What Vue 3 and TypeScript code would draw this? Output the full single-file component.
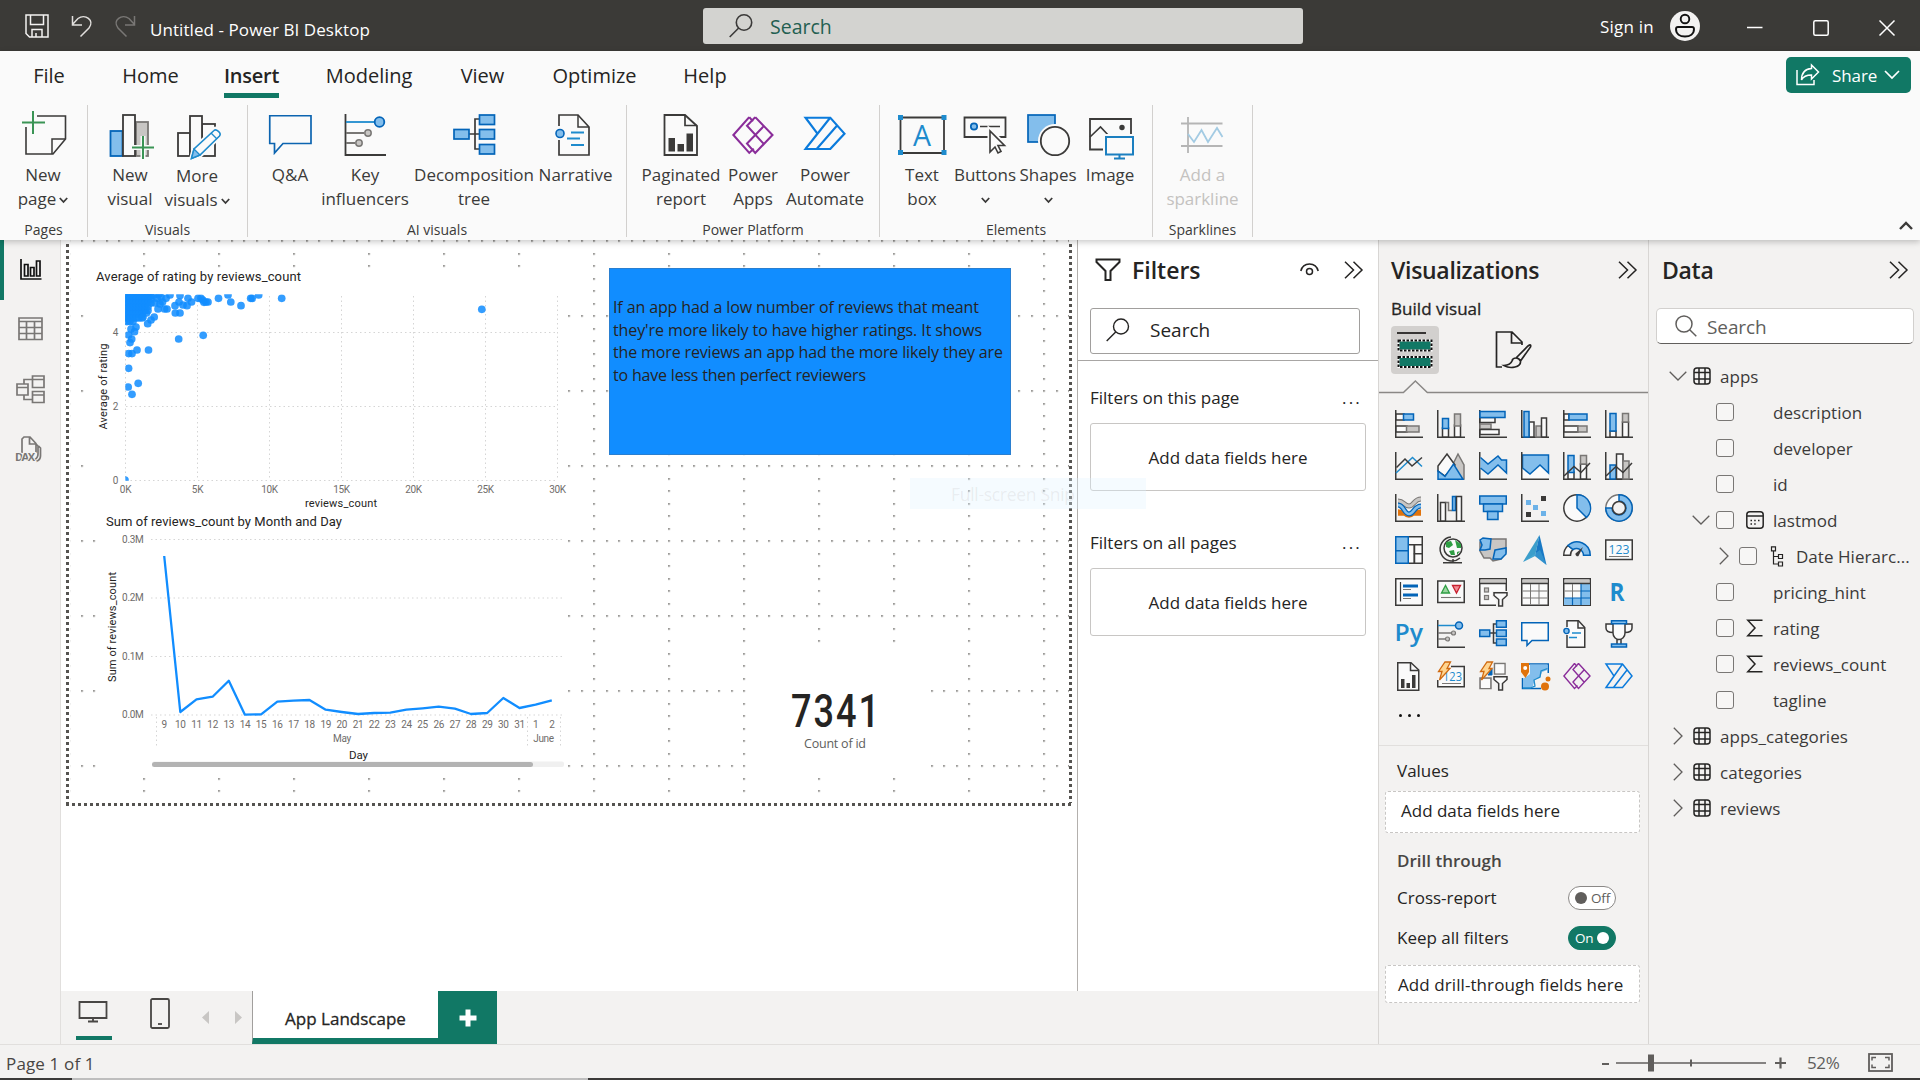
<script setup lang="ts">
interface RibbonButton { icon: string; lines: string[]; width: number; chevron?: 'inline' | 'below'; disabled?: boolean; lower?: boolean }
interface RibbonGroup { title: string; width: number; pad: number; buttons: RibbonButton[] }
interface TreeRow { label: string; kind: 'table' | 'field' | 'sub'; open?: boolean; chevron?: boolean; icon?: string }

const DARK = '#3b3a39'
const palette: Record<string, [string, string]> = {
  b: ['#83beec', '#0364b8'],
  g: ['#c8c6c4', '#797775'],
  w: ['#fafafa', DARK],
}
const box = (x: number, y: number, w: number, h: number, kind = 'w', sw = 1.5): string =>
  `<rect x="${x}" y="${y}" width="${w}" height="${h}" fill="${palette[kind][0]}" stroke="${palette[kind][1]}" stroke-width="${sw}"/>`
const line = (d: string, stroke = DARK, sw = 1.5, fill = 'none'): string =>
  `<path d="${d}" fill="${fill}" stroke="${stroke}" stroke-width="${sw}"/>`
const axis = line('M.75 0V27.25H28')
const word = (x: number, y: number, size: number, text: string, weight = 400, len = 0): string =>
  `<text x="${x}" y="${y}" font-size="${size}" font-weight="${weight}" fill="#1e8bcd" font-family="Open Sans, sans-serif"${len ? ` textLength="${len}" lengthAdjust="spacingAndGlyphs"` : ''}>${text}</text>`
const bolt = line('M8 0H13.500L10 6.500H13L2.500 18 5 9.500H1.500Z', '#d06a10', 1.3, '#ffd590')
const funnel = line('M15 14.700H28V17.500L23.500 21.500V28H19.700V21.500L15 17.500Z', DARK, 1.5, '#fafafa')

const keyInfluencers = axis + line('M1 5.500H19', '#1e8bcd') + `<circle cx="22" cy="5.500" r="3.500" fill="#83beec" stroke="#0364b8" stroke-width="1.500"/>` +
  line('M1 13H15M1 19H9', '#797775') + `<circle cx="16.500" cy="13" r="2" fill="#c8c6c4" stroke="#797775" stroke-width="1.200"/><circle cx="10.500" cy="19" r="2" fill="#c8c6c4" stroke="#797775" stroke-width="1.200"/>`
const decomposition = line('M10 13H18M18 4H14.500V23H18') + box(.75, 10, 10, 6.5, 'b') + box(17.5, .75, 9.75, 6.5, 'b') + box(17.5, 10, 9.75, 6.5, 'b') + box(17.5, 19, 9.75, 6.5, 'b')
const qna = line('M.75 2.750H27.250V20.500H11L6 25.500V20.500H.75Z', '#0364b8', 1.5, '#fafafa')
const narrative = line('M4 7V.75H15.500L21.750 7.500V27.250H4V15', DARK, 1.5, '#fafafa') + line('M15 1V8H21.500') +
  `<circle cx="3.500" cy="11" r="2.600" fill="#83beec" stroke="#0364b8" stroke-width="1.400"/>` + line('M9 13H18M6 17.500H14', '#1e8bcd', 1.3)
const paginated = line('M2.750 .75H16L23.750 8V28.250H2.750Z', DARK, 1.5, '#fafafa') + line('M15.500 1V8.500H23.500') + `<path d="M6 17H9.500V26H6ZM11.500 21H15V26H11.500ZM17 13H20.500V26H17Z" fill="${DARK}"/>`
const powerApps = line('M11.500 1.500L.9 14 11.500 26.500L14.500 23.500M11.500 1.500L14 4.500M15.500 1.500L27 14 15.500 26.500 10 20 21 8M15.500 1.500L10 7.500 21 20', '#8a2d9a', 1.4)
const powerAutomate = line('M1 2H17.500L27 14 17.500 25.500H1L9 14ZM17.500 2L1 25.500M22 8L8.500 25.500', '#0b7bdc', 1.5)

const visualIcons: string[] = [
  axis + box(1, 4, 8, 6) + box(8.5, 4, 10, 6, 'b') + box(1, 16, 11, 6) + box(11.5, 16, 12.5, 6, 'g'),
  axis + box(5.5, 18, 6, 9) + box(5.5, 8.5, 6, 10, 'b') + box(17.5, 15, 6, 12) + box(17.5, 4, 6, 12, 'g'),
  axis + box(1, 7.5, 15, 5) + box(1, 1.5, 25, 6, 'b') + box(1, 14, 11, 5, 'g') + box(1, 19.5, 19, 5),
  axis + box(8, 12, 5, 15) + box(3, 1.5, 5, 25.5, 'b') + box(15, 16, 5.5, 11, 'g') + box(20.5, 8, 5, 19),
  axis + box(1, 4, 5, 6) + box(6, 4, 18, 6, 'b') + box(1, 16, 14, 6) + box(15, 16, 9, 6, 'g'),
  axis + box(5, 21, 6, 6) + box(5, 3.5, 6, 17.5, 'b') + box(17.5, 12, 6, 15) + box(17.5, 3.5, 6, 8.5, 'g'),

  axis + line('M1 21L17.500 5.500 27 14.500', '#1e8bcd') + line('M1.500 15.500L10 7 17 14 27 5.500'),
  line('M14 16L21 2 27 13V27H20Z', '#797775', 1.5, '#c8c6c4') + line('M1 19V14L10 2 18 13 8 24Z', DARK, 1.5, '#fafafa') + line('M1 27.250V19L8 24.500 16.500 12 26 27.250Z', '#0364b8', 1.5, '#83beec'),
  axis + line('M1.500 5.500L9 12 19 4 22.500 8H27.500V21L19 13 9 22 1.500 16', '#0364b8', 1.5, '#83beec'),
  line('M1.500 16L9 22 19 13 27.500 21V27H1Z', 'none', 0, '#fafafa') + line('M1.500 3H27.500V21L19 13 9 22 1.500 16Z', '#0364b8', 1.5, '#83beec') + axis,
  axis + box(5, 20, 6, 7) + box(5, 3.5, 6, 17, 'b') + box(17.5, 12, 6, 15) + box(17.5, 3.5, 6, 8.5, 'g') + line('M1 24L11 14.500 18 20.500 27 11'),
  axis + box(5, 13, 6, 14, 'b') + box(11.5, 2, 6.5, 25) + box(18, 9, 6, 18, 'g') + line('M1 24L11 14.500 18 20.500 27 11'),

  axis + line('M3 20H9M17 20H26M3 17C9 17 9 22 14 22S19 17 26 17', '#e0730c', 3.4) + line('M3 7C9 7 9 12 14 12S19 5 26 5', '#797775', 5) + line('M3 7C9 7 9 12 14 12S19 5 26 5', '#c8c6c4', 3) + line('M3 11C9 11 9 20 14 20S19 12 26 12', '#0364b8', 5) + line('M3 11C9 11 9 20 14 20S19 12 26 12', '#83beec', 2.6),
  axis + box(3.5, 8.5, 5, 18.5) + line('M8.500 8.500H11.500V16.500H15', '#797775', 1.5) + box(15.5, 2.5, 3, 14, 'b') + box(19.5, 2.5, 5, 24.5),
  box(.75, 2, 26.5, 8, 'b') + box(4.5, 10, 19, 7.5, 'b') + box(8.5, 17.5, 10.5, 8, 'b'),
  axis + '<path d="M5 6h5v5H5zM12 11h5v5h-5zM20 17h5v5h-5z" fill="#6cb2e8"/>' + `<path d="M20 2h5v5h-5zM5 18h5v5H5z" fill="${DARK}"/>`,
  `<circle cx="14" cy="14" r="13.200" fill="#fafafa" stroke="${DARK}" stroke-width="1.500"/>` + line('M14 .8V14L23.500 23.500A13.200 13.200 0 0 0 14 .8Z', '#0364b8', 1.5, '#83beec'),
  `<circle cx="14" cy="14" r="13.200" fill="#fafafa" stroke="#797775" stroke-width="1.500"/>` + line('M14 .8A13.200 13.200 0 1 1 .8 14H7A7 7 0 1 0 14 7Z', '#0364b8', 1.5, '#83beec') + `<circle cx="14" cy="14" r="6.500" fill="#f3f2f1" stroke="${DARK}" stroke-width="1.500"/>`,

  box(13.25, .75, 14, 8) + box(13.25, 8.75, 6, 18.5) + box(19.5, 8.75, 7.75, 9) + box(19.5, 17.75, 7.75, 9.5) + box(.75, .75, 12.5, 14, 'b') + box(.75, 14.75, 12.5, 12.5, 'b'),
  `<circle cx="16" cy="12" r="9" fill="#fafafa" stroke="${DARK}" stroke-width="1.500"/><path d="M9 6L14 5 16 9 12 12 9 11ZM18 4L24 8 24 12 20 12ZM12 15L17 14 18 19 14 19ZM20 16L23 15 20 19Z" fill="#2f9e44"/>` + line('M14 1A12 12 0 1 0 23 22M16 23V26M6 26.700H25'),
  line('M1 6L11 3H27V16L22 23 14 25 11 22 5 22 1 15Z', '#797775', 1.5, '#c8c6c4') + line('M1 4L4 2 12 3 11 13 6 14 1 14 3 9Z', '#0364b8', 1.5, '#83beec') + line('M16 14L27 12V18L22 23 14 23Z', '#0364b8', 1.5, '#83beec'),
  '<path d="M18.500 -1L2 26 14 20Z" fill="#3b9ecb"/><path d="M18.500 -1L14 20 25.500 29Z" fill="#1879c5"/><path d="M2 26L14 20 25.500 29 19 14Z" fill="#4fb0d6" opacity=".45"/>',
  line('M.75 19.250A13.200 13.200 0 0 1 5 9.500L10 13.500A7 7 0 0 0 7.500 19.250Z', DARK, 1.5, '#fafafa') + line('M5 9.500A13.200 13.200 0 0 1 27.250 19.250H20.500A7 7 0 0 0 10 13.500Z', '#0364b8', 1.5, '#83beec') + `<path d="M20 11L15.500 20A2.200 2.200 0 0 1 12.500 17.500Z" fill="${DARK}"/>`,
  box(.75, 4, 26.5, 19.5) + word(3.5, 18, 13.5, '123', 400, 21) + line('M4 20.500H24', '#797775', 1),

  box(.75, .75, 26.5, 26.5) + line('M5.500 4V23.500', DARK, 1.2) + line('M8 8H23M8 17H23', '#0364b8', 3) + line('M8 11.500H16M8 20.500H16', '#797775', 1.1),
  box(.75, 3, 26.5, 21.5) + line('M4.500 15L8.500 7.500 12.500 15Z', '#2f9e44', 1.3, '#9bd5a0') + line('M15.500 7.500H23.500L19.500 15Z', '#c8202f', 1.3, '#f08c94') + line('M4 19.500H24', '#797775', 1.1),
  box(.75, .75, 26.500, 26.500) + '<path d="M1.500 1.500H26.500V5H1.500Z" fill="#c8c6c4"/>' + line('M1 5.500H27') + box(5.5, 10, 4, 4, 'g', 1.2) + box(5.5, 17.5, 4, 4, 'g', 1.2) + line('M14 14V18L18 22V28H29V14Z', '#f3f2f1', 2, '#f3f2f1') + funnel,
  box(.75, .75, 26.5, 26.5) + '<path d="M1.500 1.500H26.500V5H1.500Z" fill="#c8c6c4"/>' + line('M1 5.500H27') + line('M9.500 6V26.500M18 6V26.500M1.500 13H26.500M1.500 20H26.500', '#797775', 1),
  box(.75, .75, 26.5, 26.5) + '<path d="M18 6H27V27H1V20H18Z" fill="#83beec"/><path d="M1.500 1.500H26.500V5H1.500Z" fill="#c8c6c4"/>' + line('M1 5.500H27') + line('M9.500 6V20M1.500 13H18', '#797775', 1) + line('M18 6V27M1.500 20H27M9.500 20V27M18 13H27', '#0364b8', 1.2),
  word(4.5, 22.5, 24.5, 'R', 700, 15),

  word(-.5, 20.5, 24, 'Py', 600, 28.5),
  keyInfluencers,
  decomposition,
  qna,
  narrative,
  line('M8 2H20V13C20 17 17 19.500 14 19.500S8 17 8 13ZM8 4H1V8C1 11 4 12.500 8 12.500M20 4H27V8C27 11 24 12.500 20 12.500M12 19.500V24M16 19.500V24', DARK, 1.5, '#fafafa') + box(6.5, .75, 15, 3, 'b') + box(6.5, 24, 15, 3, 'b'),

  paginated,
  line('M14 4.500H27.250V24.750H.75V18', DARK, 1.5, '#fafafa') + word(6, 19, 12.500, '123', 400, 19) + line('M5 21.500H24', '#797775', 1) + bolt,
  box(1, 16, 11, 10.500, 'g') + '<path d="M2 17h9v9H2z" fill="#fafafa"/>' + box(15.500, 1.500, 10.500, 10.500, 'g') + '<path d="M16.300 2.300h9v9h-9z" fill="#fafafa"/>' + line('M9 13L13 7V13Z', '#0364b8', 1, '#0364b8') + funnel + bolt,
  line('M8 2H27.250V11M20 26.500H1.500V16', '#0364b8', 1.5, '#fafafa') + '<path d="M9 2.500H26.500V8L21 10 19 16 14 17 12 24 9 26H2V17L9 12Z" fill="#83beec"/>' + line('M2 26H9L14 24 13 18 19 15 20 9 26.500 6.500', '#1e8bcd', 1.3) + '<path d="M0 1H8V10L4.500 16 0 10Z" fill="#e0730c"/><circle cx="4.200" cy="6" r="2" fill="#fff"/><circle cx="27" cy="17" r="2.500" fill="#e0730c"/><circle cx="24" cy="24.500" r="4" fill="#e0730c"/>',
  powerApps,
  powerAutomate,
]

const plus = (x: number, y: number): string => line(`M${x} ${y}V${y + 23}M${x - 11} ${y + 11.5}H${x + 11}`, '#fafafa', 5) + line(`M${x} ${y}V${y + 23}M${x - 11} ${y + 11.5}H${x + 11}`, '#3a9455', 2)

/* Ribbon glyphs share a 48x50 box whose top edge sits at y=111. */
const ribbonIcons: Record<string, string> = {
  page: line('M18 5H46.500V28L34 43H7V16', DARK, 1.6, '#fafafa') + line('M33 43V28H46', DARK, 1.5) + line('M14 0V23M3 11.500H26', '#3a9455', 2),
  visual: box(4.500, 20, 12, 25, 'b', 1.8) + box(30, 11, 12, 34, 'g', 1.8) + box(17, 4, 12, 41, 'w', 1.8) + plus(37, 25),
  more: box(5, 22, 12, 23, 'w', 1.8) + box(29, 13, 13, 32, 'w', 1.8) + box(17, 5, 12, 40, 'w', 1.8) + line('M18 48L21 37 42 18 48 24 28 44Z', '#fafafa', 4, '#fafafa') + line('M18.500 47.500L21 38 41 19.500C43 17.500 49 22 46.500 25L27 44Z', '#1e8bcd', 1.6, '#fafafa') + line('M18.500 47.500L21 38 27 44ZM38 22L44 28', '#1e8bcd', 1.4, '#83beec'),
  qna: line('M3.750 4.750H45V32.500H17L8.500 42V32.500H3.750Z', '#0c64b0', 1.7, '#fafafa'),
  key: line('M4.500 3V44H45', DARK, 1.8) + line('M5 11H34', '#1e8bcd', 1.8) + line('M5 22H23M5 32H14', '#797775', 1.8) + '<circle cx="38.500" cy="11" r="4.800" fill="#83beec" stroke="#0364b8" stroke-width="1.800"/><circle cx="27" cy="22" r="3.200" fill="#c8c6c4" stroke="#797775" stroke-width="1.500"/><circle cx="18" cy="32" r="3.200" fill="#c8c6c4" stroke="#797775" stroke-width="1.500"/>',
  tree: line('M18 23H30M30 8H25V38H30', DARK, 1.7) + box(4, 18.500, 15, 9.500, 'b', 1.7) + box(29.500, 4, 15, 9.500, 'b', 1.7) + box(29.500, 18.500, 15, 9.500, 'b', 1.7) + box(29.500, 33.500, 15, 9.500, 'b', 1.7),
  narrative: line('M7 15V4H26L37 16V44H7V29', DARK, 1.700, '#fafafa') + line('M26 4V16H37') + '<circle cx="8" cy="22.500" r="4" fill="#83beec" stroke="#0364b8" stroke-width="1.600"/>' + line('M19 21.500H32M15 27.500H28M19 34H32', '#1e8bcd', 1.8),
  paginated: line('M7.500 4H28L40 15V44H7.500Z', DARK, 1.800, '#fafafa') + line('M28 4V14.500H40', DARK, 1.7) + `<path d="M11.500 27H18V40.500H11.500ZM20.500 33H27V40.500H20.500ZM29.500 22.500H36V40.500H29.500Z" fill="${DARK}"/>`,
  apps: `<g transform="translate(3 4) scale(1.500 1.430)">${powerApps}</g>`,
  automate: `<g transform="translate(3 4) scale(1.500 1.330)">${powerAutomate}</g>`,
  text: line('M2.500 6.500H46V42H2.500Z', DARK, 1.800, '#fafafa') + '<path d="M0 4h5v5H0zM43.500 4h5v5h-5zM0 39h5v5H0zM43.500 39h5v5h-5z" fill="#1e8bcd"/>' + word(15, 34.500, 29, 'A', 400, 18),
  buttons: line('M3.500 6.500H44.500V26H3.500Z', DARK, 1.800, '#fafafa') + '<circle cx="13" cy="15.500" r="3.200" fill="#83beec" stroke="#0364b8" stroke-width="1.700"/>' + line('M19 15.500H39') + line('M29 20V41L34 36 37 42 40 40.500 37 34.500H44Z', '#fafafa', 5, '#fafafa') + line('M29 20V41L34 36 37 42 40 40.500 37 34.500H43.500Z', DARK, 1.600, '#fafafa'),
  shapes: box(4, 4, 27, 27, 'b', 1.7) + '<circle cx="31" cy="30" r="17" fill="#fafafa"/>' + `<circle cx="31" cy="30" r="14.200" fill="#fafafa" stroke="${DARK}" stroke-width="1.800"/>`,
  image: line('M4 8H45V38.500H4Z', DARK, 1.800, '#fafafa') + line('M4 26L14.500 16 24 26', DARK, 1.600) + `<circle cx="36" cy="16.500" r="2.700" fill="${DARK}"/>` + '<path d="M17 23H50V49H17Z" fill="#fafafa"/>' + line('M20 26H47V43.500H20ZM33.500 44V47.500M28 47.500H39', '#1b7fc0', 2),
  sparkline: line('M2 12.500H43.500M2 35H43.500M9 6V42', '#b5b5b5', 1.800) + line('M9 23L15 31 22.500 19 29 31 38 17 43.500 26', '#a3cbe3', 1.800),
}

const tabs = [
  { label: 'File', width: 98 }, { label: 'Home', width: 105 }, { label: 'Insert', width: 97, active: true }, { label: 'Modeling', width: 138 },
  { label: 'View', width: 89 }, { label: 'Optimize', width: 135 }, { label: 'Help', width: 86 },
]

const groups: RibbonGroup[] = [
  { title: 'Pages', width: 88, pad: 0, buttons: [{ icon: 'page', lines: ['New', 'page'], width: 86, chevron: 'inline' }] },
  { title: 'Visuals', width: 160, pad: 9, buttons: [{ icon: 'visual', lines: ['New', 'visual'], width: 66 }, { icon: 'more', lines: ['More', 'visuals'], width: 68, chevron: 'inline', lower: true }] },
  { title: 'AI visuals', width: 379, pad: 9, buttons: [{ icon: 'qna', lines: ['Q&A'], width: 66 }, { icon: 'key', lines: ['Key', 'influencers'], width: 84 }, { icon: 'tree', lines: ['Decomposition', 'tree'], width: 134 }, { icon: 'narrative', lines: ['Narrative'], width: 69 }] },
  { title: 'Power Platform', width: 253, pad: 15, buttons: [{ icon: 'paginated', lines: ['Paginated', 'report'], width: 78 }, { icon: 'apps', lines: ['Power', 'Apps'], width: 66 }, { icon: 'automate', lines: ['Power', 'Automate'], width: 78 }] },
  { title: 'Elements', width: 273, pad: 10, buttons: [{ icon: 'text', lines: ['Text', 'box'], width: 64 }, { icon: 'buttons', lines: ['Buttons'], width: 62, chevron: 'below' }, { icon: 'shapes', lines: ['Shapes'], width: 64, chevron: 'below' }, { icon: 'image', lines: ['Image'], width: 60 }] },
  { title: 'Sparklines', width: 100, pad: 0, buttons: [{ icon: 'sparkline', lines: ['Add a', 'sparkline'], width: 99, disabled: true }] },
]

const dense: [number, number][] = []
for (let y = 292; y <= 325; y += 3.7) {
  const reach = y < 304 ? 153 : y < 311 ? 148 : y < 318 ? 143 : 135
  for (let x = 124; x <= reach; x += 3) dense.push([x, y])
}
const scatter: [number, number][] = [
  ...dense,
  [481.800, 309.300], [281.700, 298.300], [258.700, 295], [252.200, 298.300], [250.700, 298.300], [241, 305.700], [230.800, 302], [228, 295], [218.500, 298.300],
  [208, 302], [204, 302.300], [206, 302], [201, 298.300], [198, 298.300], [202.800, 300], [191.500, 302], [188, 298.300], [187, 305.700], [180, 295.500], [179, 302],
  [183, 305], [175, 305.700], [175.300, 313], [180, 313], [170, 295], [167, 309], [164.500, 309], [166, 298.300], [162.500, 302], [158, 309], [157, 298.300], [160, 304],
  [161, 297], [155, 303], [154, 295], [159, 294], [178.700, 339], [203.200, 335.300], [154.200, 317], [147.700, 323.700], [151, 320], [146.500, 313], [143, 317],
  [148.500, 350], [137, 350], [128.600, 353.600], [132, 353.600], [128.600, 368.300], [138.200, 383.300], [128.200, 387], [132, 394.300], [130, 342.600], [131.700, 339],
  [128.600, 335], [134.500, 331.700], [131, 329], [136, 327], [125, 480],
]

const series = [168, 636, 598, 590, 542, 644, 643, 605, 602, 600, 629, 636, 642, 639, 638, 629, 625, 620, 626, 642, 639, 594, 624, 614, 601]
const dayX = (i: number): number => 164.200 + i * 16.150
const linePoints = series.map((v, i) => `${dayX(i).toFixed(1)},${(500 + v / 3).toFixed(1)}`).join(' ')
const days = series.map((_, i) => (i < 23 ? i + 9 : i - 22))

const note = [
  { text: 'If an app had a low number of reviews that meant', y: 313, w: 366 },
  { text: "they're more likely to have higher ratings. It shows", y: 336, w: 369 },
  { text: 'the more reviews an app had the more likely they are', y: 358, w: 390 },
  { text: 'to have less then perfect reviewers', y: 381, w: 253 },
]

const tree: TreeRow[] = [
  { label: 'apps', kind: 'table', open: true },
  { label: 'description', kind: 'field' },
  { label: 'developer', kind: 'field' },
  { label: 'id', kind: 'field' },
  { label: 'lastmod', kind: 'field', open: true, chevron: true, icon: 'calendar' },
  { label: 'Date Hierarc...', kind: 'sub', chevron: true, icon: 'hierarchy' },
  { label: 'pricing_hint', kind: 'field' },
  { label: 'rating', kind: 'field', icon: 'sum' },
  { label: 'reviews_count', kind: 'field', icon: 'sum' },
  { label: 'tagline', kind: 'field' },
  { label: 'apps_categories', kind: 'table' },
  { label: 'categories', kind: 'table' },
  { label: 'reviews', kind: 'table' },
]
const treeIcons: Record<string, string> = {
  calendar: '<rect x=".8" y=".8" width="16.400" height="16.400" rx="3"/><path d="M1 5H17"/><path d="M4.500 9.500H6M8.200 9.500H9.700M12 9.500H13.500M4.500 13H6M8.200 13H9.700" stroke-width="1.600"/>',
  hierarchy: '<path d="M2.500 .8H6.500V4.800H2.500ZM9.500 8.500H13.500V12.500H9.500ZM9.500 16H13.500V20H9.500ZM4.500 5V18H9.500M4.500 10.500H9.500" stroke-width="1.200"/>',
  sum: '<path d="M16.500 1.200H1.800L9 9 1.800 16.800H16.500" stroke-width="1.500"/>',
}
</script>

<template>
  <div class="app">
    <header class="titlebar">
      <svg class="quick" width="112" height="24" viewBox="0 0 112 24" fill="none">
        <path d="M1 1H23V23H4.500L1 19.500ZM5.500 1V10.500H18.500V1M7 23V15.500H17V23M11 19V23" stroke="#f3f2f1" stroke-width="1.500" />
        <path d="M47.500 2V11H57M47.500 10.500L53 4.500C60 -.5 70 6 64 14L55.500 22.500" stroke="#e1dfdd" stroke-width="1.500" />
        <path d="M109.500 2V11H100M109.500 10.500L104 4.500C97 -.5 87 6 93 14L101.500 22.500" stroke="#797775" stroke-width="1.500" />
      </svg>
      <span class="doc-title">Untitled - Power BI Desktop</span>
      <div class="global-search">
        <svg width="24" height="24" viewBox="0 0 24 24" fill="none" stroke="#3b3a39" stroke-width="1.600"><circle cx="15" cy="8.500" r="7.700" /><path d="M9.700 14L.7 23" /></svg>
        <span>Search</span>
      </div>
      <span class="signin">Sign in</span>
      <svg class="avatar" width="30" height="30" viewBox="0 0 30 30"><circle cx="15" cy="15" r="15" fill="#f3f2f1" /><g fill="none" stroke="#111" stroke-width="1.900"><circle cx="15" cy="8" r="4.300" /><path d="M8 16H22A2 2 0 0 1 24 18C24 23 20 25.500 15 25.500S6 23 6 18A2 2 0 0 1 8 16Z" /></g></svg>
      <svg class="window-controls" width="148" height="16" viewBox="0 0 148 16" fill="none" stroke="#fff" stroke-width="1.500"><path d="M0 7.500H15.500" /><rect x="66.800" y=".8" width="14.400" height="14.400" rx="1.500" /><path d="M132.500 .5L147.500 15.500M147.500 .5L132.500 15.500" /></svg>
    </header>

    <section class="ribbon">
      <nav class="tabs">
        <span v-for="t in tabs" :key="t.label" class="tab" :class="{ active: t.active }" :style="{ width: t.width + 'px' }"><b>{{ t.label }}</b></span>
        <button class="share">
          <svg width="24" height="22" viewBox="0 0 24 22" fill="none" stroke="#fff" stroke-width="1.500"><path d="M1 6V20.500H18V16M15.500 1L22.500 8 15.500 15V11C10 11 7 13 5.500 16C5.500 9 9 5 15.500 4.500Z" /></svg>
          <span>Share</span>
          <svg width="16" height="10" viewBox="0 0 16 10" fill="none" stroke="#fff" stroke-width="1.700"><path d="M1 1L8 8 15 1" /></svg>
        </button>
      </nav>
      <div class="groups">
        <div v-for="g in groups" :key="g.title" class="group" :style="{ width: g.width + 'px' }">
          <div class="group-buttons" :style="{ paddingLeft: g.pad + 'px' }">
            <div v-for="b in g.buttons" :key="b.icon" class="rbtn" :class="{ disabled: b.disabled, lower: b.lower }" :style="{ width: b.width + 'px' }">
              <svg width="48" height="50" viewBox="0 0 48 50" v-html="ribbonIcons[b.icon]" />
              <span v-for="(l, i) in b.lines" :key="l" class="rlabel">{{ l }}<svg v-if="b.chevron === 'inline' && i === 1" class="chev" width="9" height="7" viewBox="0 0 9 7"><path d="M.8 1L4.500 5 8.200 1" /></svg></span>
              <span v-if="b.chevron === 'below'" class="rlabel"><svg class="chev" width="9" height="7" viewBox="0 0 9 7"><path d="M.8 1L4.500 5 8.200 1" /></svg></span>
            </div>
          </div>
          <div class="group-title">{{ g.title }}</div>
        </div>
        <svg class="collapse" width="14" height="9" viewBox="0 0 14 9" fill="none" stroke="#3b3a39" stroke-width="2.400"><path d="M1 8L7 2 13 8" /></svg>
      </div>
    </section>

    <main class="main">
      <aside class="rail">
        <div class="rail-item on"><svg width="22" height="21" viewBox="0 0 22 21" stroke="#111"><path d="M1 0V20H21.500M4.500 17V5.500H8V17ZM10.500 17V8.500H14V17ZM16.500 17V2H20V17Z" /></svg></div>
        <div class="rail-item"><svg width="25" height="24" viewBox="0 0 25 24"><path d="M1 1H24V22.500H1ZM1 4.500H24M1 10.500H24M1 16.500H24M8.500 4.500V22.500M16.500 4.500V22.500" /></svg></div>
        <div class="rail-item"><svg width="29" height="29" viewBox="0 0 29 29"><path d="M16.500 1H28V12.500H16.500ZM16.500 4.500H28M16.500 16.500H28V27.500H16.500ZM16.500 20H28M1 9H12V20H1ZM1 12.500H12M8 9V4.500H16.500M8 20V24.500H16.500" /></svg></div>
        <div class="rail-item dax-item"><svg width="27" height="26" viewBox="0 0 27 26"><path d="M7 17V3L9 1H15L21 7.500V17M14.500 1V8H21M21 8L23 10V18Q23 22 19.500 23.500M23.500 10L25.500 12V20Q25.500 24 21 25.500" /><text x="0" y="24.500" textLength="20" class="dax">DAX</text></svg></div>
      </aside>

      <div class="workspace">
        <div class="upper">
          <svg class="canvas" width="1016" height="751" viewBox="61 240 1016 751">
            <defs>
              <pattern id="grid" x="68.250" y="240.200" width="75" height="75" patternUnits="userSpaceOnUse">
                <g fill="#55534f"><rect v-for="n in 6" :key="'h' + n" :x="Math.round((n - 1) * 12.5)" y="0" width="1.500" height="1.500" /><rect v-for="n in 5" :key="'v' + n" x="0" :y="Math.round(n * 12.5)" width="1.500" height="1.500" /></g>
              </pattern>
              <clipPath id="plot"><rect x="125.300" y="294.300" width="434" height="186.500" /></clipPath>
            </defs>
            <rect x="70" y="240" width="999" height="563" fill="url(#grid)" />
            <g fill="none" stroke="#555350" stroke-width="3" stroke-dasharray="3 3">
              <path d="M67.500 244V803M1070.500 244V803" /><path d="M66 804.500H1072" />
            </g>
            <rect x="86" y="272" width="479" height="245" fill="#fff" />
            <rect x="97" y="515" width="468" height="257" fill="#fff" />
            <rect x="748" y="653" width="180" height="118" fill="#fff" />

            <g class="din">
              <text x="96" y="281" textLength="205" font-size="13" fill="#252423">Average of rating by reviews_count</text>
              <g class="gridline"><path v-for="n in 7" :key="n" :d="`M${125.500 + (n - 1) * 72} 296V480`" /><path v-for="n in 3" :key="'r' + n" :d="`M126 ${480.500 - (n - 1) * 74}H558`" /></g>
              <g clip-path="url(#plot)" fill="#118dff" fill-opacity=".86"><circle v-for="(p, i) in scatter" :key="i" :cx="p[0]" :cy="p[1]" r="3.850" /></g>
              <g class="tick"><text v-for="n in 7" :key="n" :x="125.500 + (n - 1) * 72" y="492.500" text-anchor="middle">{{ (n - 1) * 5 }}K</text><text v-for="n in 3" :key="'y' + n" x="118" :y="483.500 - (n - 1) * 74" text-anchor="end">{{ (n - 1) * 2 }}</text></g>
              <text x="305" y="507" textLength="72" font-size="11" fill="#252423">reviews_count</text>
              <text transform="translate(106.500 429.500) rotate(-90)" textLength="86" font-size="11" fill="#252423">Average of rating</text>

              <text x="106" y="526" textLength="236" font-size="13" fill="#252423">Sum of reviews_count by Month and Day</text>
              <g class="gridline"><path v-for="n in 4" :key="n" :d="`M151 ${539.500 + (n - 1) * 58.500}H563`" /><path d="M156.500 717V746M527.500 717V746M560.500 717V746" /></g>
              <g class="tick"><text v-for="n in 4" :key="n" x="143.500" :y="543 + (n - 1) * 58.400" text-anchor="end">0.{{ 4 - n }}M</text><text v-for="(d, i) in days" :key="'d' + i" :x="dayX(i)" y="728" text-anchor="middle">{{ d }}</text><text x="342" y="741.500" text-anchor="middle">May</text><text x="543.500" y="741.500" text-anchor="middle">June</text></g>
              <polyline :points="linePoints" fill="none" stroke="#118dff" stroke-width="2.300" stroke-linejoin="round" />
              <text x="358.500" y="759" text-anchor="middle" font-size="11.500" fill="#252423">Day</text>
              <text transform="translate(116 682) rotate(-90)" textLength="110" font-size="11" fill="#252423">Sum of reviews_count</text>
              <rect x="152" y="761.500" width="412" height="5.500" rx="2" fill="#f0f0f0" /><rect x="152" y="762" width="381" height="5" rx="2.500" fill="#b3b3b3" />
              <g class="big"><text v-for="(c, i) in ['7', '3', '4', '1']" :key="c" :x="791 + i * 22.500" y="726.500" :textLength="i === 3 ? 21 : 20.500" lengthAdjust="spacingAndGlyphs">{{ c }}</text></g>
            </g>
            <text x="804" y="748" textLength="62" font-size="12.500" fill="#605e5c" class="sans">Count of id</text>

            <rect x="609.500" y="268.500" width="401" height="186" fill="#118dff" stroke="#2a7fd0" />
            <text v-for="n in note" :key="n.y" x="613" :y="n.y" :textLength="n.w" font-size="16" fill="#252423" class="sans">{{ n.text }}</text>
          </svg>

          <aside class="filters">
            <div class="f-head">
              <svg width="26" height="24" viewBox="0 0 26 24" fill="none" stroke="#252423" stroke-width="2"><path d="M1.500 1.500H24.500V4L15.500 13V22H10.500V13L1.500 4Z" /></svg>
              <h2>Filters</h2>
              <svg class="eye" width="19" height="13" viewBox="0 0 19 13" fill="none" stroke="#252423" stroke-width="1.500"><path d="M.8 8C3 -1.500 16 -1.500 18.200 8" /><circle cx="9.500" cy="8.500" r="3" /></svg>
              <svg class="dbl" viewBox="0 0 20 18"><path d="M1 .7L9.500 9 1 17.300M9.500 .7L18 9 9.500 17.300" /></svg>
            </div>
            <div class="f-search"><svg width="24" height="24" viewBox="0 0 24 24" fill="none" stroke="#252423" stroke-width="1.400"><circle cx="15" cy="8.500" r="7.500" /><path d="M9.700 14L.7 23" /></svg><span>Search</span></div>
            <hr>
            <div class="f-title first"><span>Filters on this page</span><i>...</i></div>
            <div class="f-well">Add data fields here</div>
            <div class="f-title"><span>Filters on all pages</span><i>...</i></div>
            <div class="f-well">Add data fields here</div>
          </aside>
        </div>

        <footer class="pages">
          <div class="view on"><svg width="30" height="32" viewBox="0 0 30 32" fill="none" stroke="#484644" stroke-width="1.800"><path d="M1.500 5H28.500V21H1.500ZM15 21V24M10 24.500H20" /></svg></div>
          <div class="view phone"><svg width="20" height="32" viewBox="0 0 20 32" fill="none" stroke="#484644" stroke-width="1.800"><rect x="1" y="1" width="18" height="29" rx="1.500" /><path d="M8 26H12" /></svg></div>
          <svg class="arrows" width="40" height="13" viewBox="0 0 40 13" fill="#c8c6c4"><path d="M7 0V13L0 6.500ZM33 0V13L40 6.500Z" /></svg>
          <div class="page-tab">App Landscape</div>
          <div class="add-page"><svg width="18" height="18" viewBox="0 0 18 18" stroke="#fff" stroke-width="5"><path d="M9 .5V17.500M.5 9H17.500" /></svg></div>
        </footer>
      </div>

      <aside class="viz">
        <div class="p-head"><h2>Visualizations</h2><svg class="dbl" viewBox="0 0 20 18"><path d="M1 .7L9.500 9 1 17.300M9.500 .7L18 9 9.500 17.300" /></svg></div>
        <div class="build">Build visual</div>
        <div class="modes">
          <div class="mode on"><svg width="36" height="36" viewBox="0 0 36 36"><path d="M0 1H29" stroke="#252423" stroke-width="1.800" /><path d="M1.500 8.500H34.500V18.500H1.500ZM1.500 25H34.500V35H1.500Z" fill="#117865" stroke="#fff" stroke-width="2" /><path d="M1.500 8.500H34.500V18.500H1.500ZM1.500 25H34.500V35H1.500Z" fill="none" stroke="#111" stroke-width="2" stroke-dasharray="2.500 1.500" /></svg></div>
          <div class="mode"><svg width="38" height="38" viewBox="0 0 38 38" fill="none" stroke="#252423" stroke-width="1.700"><path d="M7 36H1.500V1H17L27 11V14M16.500 1V12H27M21 27L33 15Q36.500 12.500 35.500 16L25.500 30M21 27Q17.500 27 17 30Q15.500 34 9 34.500Q14 37.500 20 36Q26 34.500 25.500 30Q24 27 21 27Z" /></svg></div>
        </div>
        <svg class="caret" width="270" height="14" viewBox="0 0 270 14" fill="none" stroke="#8a8886" stroke-width="1.500"><path d="M0 12.500H24.500L36.500 1 48.500 12.500H270" /></svg>
        <div class="icons">
          <svg v-for="(ic, i) in visualIcons" :key="i" width="28" height="28" viewBox="0 0 28 28" v-html="ic" />
        </div>
        <div class="more-dots"><i /><i /><i /></div>
        <div class="wells">
          <div class="w-label">Values</div>
          <div class="w-box tall">Add data fields here</div>
          <div class="w-label strong">Drill through</div>
          <div class="w-row"><span>Cross-report</span><span class="toggle"><i />Off</span></div>
          <div class="w-row second"><span>Keep all filters</span><span class="toggle checked">On<i /></span></div>
          <div class="w-box drill">Add drill-through fields here</div>
        </div>
      </aside>

      <aside class="data">
        <div class="p-head"><h2>Data</h2><svg class="dbl" viewBox="0 0 20 18"><path d="M1 .7L9.500 9 1 17.300M9.500 .7L18 9 9.500 17.300" /></svg></div>
        <div class="d-search"><svg width="22" height="22" viewBox="0 0 22 22" fill="none" stroke="#605e5c" stroke-width="1.500"><circle cx="9" cy="9" r="8" /><path d="M14.700 14.700L21.300 21.300" /></svg><span>Search</span></div>
        <div class="tree">
          <div v-for="r in tree" :key="r.label" class="row" :class="r.kind">
            <span class="twist">
              <svg v-if="r.open" width="18" height="10" viewBox="0 0 18 10"><path d="M.7 .8L9 9 17.300 .8" /></svg>
              <svg v-else-if="r.kind === 'table' || r.chevron" width="10" height="18" viewBox="0 0 10 18"><path d="M.8 .7L9 9 .8 17.300" /></svg>
            </span>
            <svg v-if="r.kind === 'table'" class="table-icon" width="18" height="18" viewBox="0 0 18 18"><rect x="1" y="1" width="16" height="16" rx="3" /><path d="M1 5.500H17M1 12H17M6 1V17M12 1V17" /></svg>
            <template v-else><span class="check" /><span class="ficon"><svg v-if="r.icon" width="18" :height="r.icon === 'hierarchy' ? 21 : 18" :viewBox="r.icon === 'hierarchy' ? '0 0 18 21' : '0 0 18 18'" v-html="treeIcons[r.icon]" /></span></template>
            <span class="name">{{ r.label }}</span>
          </div>
        </div>
      </aside>
    </main>

    <footer class="status">
      <span class="page-no">Page 1 of 1</span>
      <svg class="zoomer" width="186" height="18" viewBox="0 0 186 18" fill="none" stroke="#605e5c"><path d="M1 10H8M174 9H185M179.500 3.500V14.500" stroke-width="2.200" /><path d="M15 9H165" stroke-width="1.300" /><path d="M90 5.500V12.500" stroke-width="2" /><path d="M50 .5V17.500" stroke-width="6" /></svg>
      <span class="percent">52%</span>
      <svg width="25" height="19" viewBox="0 0 25 19" fill="none" stroke="#605e5c"><rect x="1" y="1" width="23" height="17" stroke-width="1.800" /><path d="M4 7.500V4.500H8M17 4.500H21V7.500M21 11.500V14.500H17M8 14.500H4V11.500" stroke-width="1.500" /></svg>
    </footer>
    <div class="edge"><i /><i /><i /><i /></div>
    <div class="ghost"><span>Full-screen Snip</span></div>
  </div>
</template>

<style>
body { margin: 0; overflow: hidden; }
</style>

<style scoped>
.app { position: relative; width: 1920px; height: 1080px; display: flex; flex-direction: column; overflow: hidden; background: #f3f2f1; color: #252423; font: 17px/24px "Open Sans", sans-serif; }
.app * { box-sizing: border-box; }
svg { display: block; flex: none; overflow: visible; }
h2 { margin: 0; font-size: 23px; font-weight: 600; line-height: 30px; }
i { font-style: normal; }

.titlebar { height: 51px; flex: none; display: flex; align-items: center; background: #3b3a37; color: #fff; padding-left: 25px; }
.quick { margin-top: 1px; }
.doc-title { width: 553px; margin: 8px 0 0 13px; font-size: 17px; letter-spacing: .07px; }
.global-search { width: 600px; height: 36px; margin-top: 1px; padding-left: 26px; display: flex; align-items: center; gap: 17px; border-radius: 3px; background: #d3d3d0; color: #235f51; font-size: 19.500px; }
.global-search span { padding-top: 2px; }
.signin { width: 54px; margin: 2px 0 0 297px; font-size: 17px; letter-spacing: .2px; white-space: nowrap; }
.avatar { margin-left: 16px; }
.window-controls { margin: 4px 0 0 47px; }

.ribbon { position: relative; z-index: 2; height: 189px; flex: none; background: #fafafa; box-shadow: 0 2px 6px rgba(0, 0, 0, .22); }
.tabs { height: 54px; display: flex; }
.tab { height: 48px; display: flex; justify-content: center; }
.tab b { font-size: 20px; line-height: 50px; font-weight: 400; height: 47px; }
.tab.active b { font-weight: 600; letter-spacing: -.25px; border-bottom: 5px solid #117865; }
.share { margin: 6px 9px 0 auto; width: 125px; height: 36px; display: flex; align-items: center; border: 0; padding: 0 0 0 10px; border-radius: 5px; background: #117865; color: #fff; font: 17px/24px "Open Sans", sans-serif; }
.share span { width: 52px; margin: 2px 0 0 12px; text-align: left; letter-spacing: -.1px; }
.groups { height: 132px; display: flex; }
.group { border-right: 1px solid #d2d0ce; display: flex; flex-direction: column; justify-content: space-between; }
.group-buttons { display: flex; }
.rbtn { display: flex; flex-direction: column; align-items: center; padding-top: 6px; color: #3b3a39; }
.rbtn > svg { margin-bottom: 2px; }
.rlabel { height: 24px; line-height: 24px; display: flex; align-items: center; gap: 3px; white-space: nowrap; letter-spacing: -.02px; }
.lower .rlabel { position: relative; top: 1px; }
.disabled { color: #c4c2c0; }
.chev { fill: none; stroke: #3b3a39; stroke-width: 1.800; margin-top: 2px; }
.group-title { font-size: 14px; line-height: 20px; height: 20px; text-align: center; color: #3b3a39; margin-bottom: -3px; }
.collapse { margin: 116px 7px 0 auto; }

.main { height: 804px; flex: none; display: flex; }
.rail { width: 61px; border-right: 1px solid #e1dfdd; }
.rail-item { height: 60px; display: flex; align-items: center; justify-content: center; padding-bottom: 2px; }
.rail-item.on { border-left: 4px solid #117865; padding-right: 3px; }
.dax-item { padding-right: 3px; }
.rail-item svg { fill: none; stroke: #797775; stroke-width: 1.700; }
.rail-item.on svg { stroke: #111; }
.rail-item .dax { font: 700 11px "Open Sans", sans-serif; fill: #797775; stroke: #f3f2f1; stroke-width: 2px; paint-order: stroke; }
.workspace { width: 1317px; display: flex; flex-direction: column; }
.upper { height: 751px; display: flex; background: #fff; }
.canvas { overflow: hidden; }
.din { font-family: Roboto, sans-serif; }
.big { font-family: Roboto, sans-serif; font-size: 46px; font-weight: 500; fill: #252423; }
.sans { font-family: "Open Sans", sans-serif; }
.gridline { fill: none; stroke: #d5d5d5; stroke-width: 1; stroke-dasharray: 1.500 3; }
.tick { font-size: 10px; fill: #6f6d6b; letter-spacing: -.3px; }

.filters { width: 301px; padding-top: 15px; border-left: 1px solid #b3b0ad; color: #252423; }
.f-head { height: 30px; padding: 0 14px 0 17px; display: flex; align-items: center; }
.f-head h2 { margin-left: 11px; }
.eye { margin: -2px 25px 0 auto; }
.dbl { width: 20px; height: 18px; fill: none; stroke: #252423; stroke-width: 1.500; }
.f-search { width: 270px; height: 46px; margin: 23px 0 0 12px; padding: 0 0 2px 15px; display: flex; align-items: center; gap: 20px; border: 1px solid #a19f9d; border-radius: 3px; font-size: 19px; }
hr { margin: 6px 0 0; border: 0; border-top: 1px solid #a8a6a4; }
.f-title { display: flex; justify-content: space-between; padding: 0 16px 0 12px; margin: 40px 0 13px; height: 24px; }
.f-title.first { margin-top: 25px; }
.f-title i { letter-spacing: 2.200px; }
.f-well { width: 276px; height: 68px; margin-left: 12px; border: 1px solid #c8c6c4; border-radius: 3px; line-height: 67px; text-align: center; }

.pages { height: 53px; display: flex; align-items: center; }
.view { width: 36px; height: 46px; margin-left: 15px; display: flex; justify-content: center; padding-top: 3px; }
.view.on { border-bottom: 4px solid #117865; height: 46px; margin-top: -1px; }
.view.on svg { margin-left: -2px; }
.view.phone { margin-left: 30px; }
.arrows { margin-left: 24px; }
.page-tab { width: 186px; height: 53px; margin-left: 10px; background: #fff; border-left: 1px solid #a19f9d; border-bottom: 6px solid #117865; text-align: center; line-height: 55px; font-weight: 500; -webkit-text-stroke: .3px #252423; }
.add-page { width: 59px; height: 53px; background: #117865; display: flex; align-items: center; justify-content: center; }

.viz { width: 271px; border-left: 1px solid #d8d6d4; border-right: 1px solid #d8d6d4; padding-top: 15px; }
.p-head { height: 30px; padding: 0 10px 0 12px; display: flex; align-items: center; justify-content: space-between; }
.p-head h2 { font-size: 23px; letter-spacing: -.3px; font-weight: 600; }
.build { margin: 12px 0 5px 12px; height: 24px; letter-spacing: .05px; -webkit-text-stroke: .3px #252423; }
.modes { display: flex; gap: 51px; margin-left: 12px; height: 48px; }
.mode { width: 48px; height: 48px; display: flex; align-items: center; justify-content: center; border-radius: 4px; }
.mode.on { background: #d2d0ce; }
.caret { margin-top: 6px; width: 269px; }
.icons { display: grid; grid-template-columns: repeat(6, 28px); gap: 14px; margin: 16px 0 0 16px; }
.more-dots { height: 56px; display: flex; gap: 6px; padding: 24px 0 0 20px; border-bottom: 1px solid #e1dfdd; }
.more-dots i { width: 3px; height: 3px; border-radius: 50%; background: #111; }
.wells { padding: 0 8px 0 6px; }
.w-label { margin: 13px 0 8px 12px; height: 24px; }
.w-label.strong { margin: 16px 0 13px 12px; font-weight: 600; color: #484644; }
.w-box { height: 42px; border: 1px dashed #c8c6c4; border-radius: 3px; background: #fff; padding-left: 15px; line-height: 38px; white-space: nowrap; }
.w-box.drill { height: 38px; margin-top: 15px; padding-left: 12px; line-height: 37px; letter-spacing: .08px; }
.w-row { height: 24px; margin: 0 24px 0 12px; display: flex; justify-content: space-between; align-items: center; }
.w-row.second { margin-top: 16px; }
.toggle { width: 48px; height: 24px; border: 1px solid #8a8886; border-radius: 12px; background: #fff; display: flex; align-items: center; gap: 4px; padding-left: 6px; font-size: 13.500px; letter-spacing: -.2px; color: #605e5c; }
.toggle i { width: 12px; height: 12px; border-radius: 50%; background: #605e5c; }
.toggle.checked { background: #117865; border-color: #117865; color: #fff; }
.toggle.checked i { background: #fff; }

.data { width: 271px; padding-top: 15px; }
.data .p-head { padding: 0 11px 0 13px; }
.d-search { width: 258px; height: 36px; margin: 23px 0 14px 7px; padding-left: 18px; display: flex; align-items: center; gap: 10px; border: 1px solid #d2d0ce; border-bottom: 1.500px solid #605e5c; border-radius: 5px; background: #fff; font-size: 19px; color: #605e5c; }
.d-search span { padding-top: 2px; letter-spacing: -.1px; }
.row { height: 36px; display: flex; align-items: center; padding-left: 20px; color: #3b3a39; }
.row.field { padding-left: 44px; }
.row.sub { padding-left: 67px; }
.row svg { fill: none; stroke: #252423; stroke-width: 1.500; }
.twist { width: 23px; display: flex; }
.twist svg { stroke: #605e5c; stroke-width: 1.300; }
.row.table .twist { width: 24px; }
.row .twist svg[width="10"] { margin-left: 4px; }
.row.field .twist svg { margin-left: -1px; }
.row.sub .twist svg { margin-left: 3px; }
.check { width: 18px; height: 18px; border: 1px solid #797775; border-radius: 3px; background: #f7f6f5; }
.ficon { width: 39px; padding-left: 12px; }
.name { white-space: nowrap; padding-top: 2px; letter-spacing: .04px; }
.table .name { margin-left: 9px; }

.status { height: 36px; flex: none; display: flex; align-items: center; border-top: 1px solid #e1dfdd; padding-left: 6px; color: #484644; }
.page-no { margin-top: 2px; width: 1595px; letter-spacing: .15px; }
.percent { box-sizing: content-box; width: 61px; padding-left: 20px; color: #605e5c; letter-spacing: -.4px; }
.edge { position: absolute; left: 0; bottom: 0; width: 1920px; height: 2px; display: flex; }
.edge i { background: #3b3a39; width: 72px; }
.edge i:nth-child(2) { width: 516px; background: #bebebe; }
.edge i:nth-child(3) { width: 747px; }
.edge i:nth-child(4) { flex: 1; }
.ghost { position: absolute; left: 910px; top: 478px; width: 236px; height: 31px; padding-left: 41px; background: rgba(224, 242, 255, .32); color: rgba(120, 110, 110, .11); font-size: 17.500px; line-height: 33px; letter-spacing: -.3px; pointer-events: none; }
</style>
